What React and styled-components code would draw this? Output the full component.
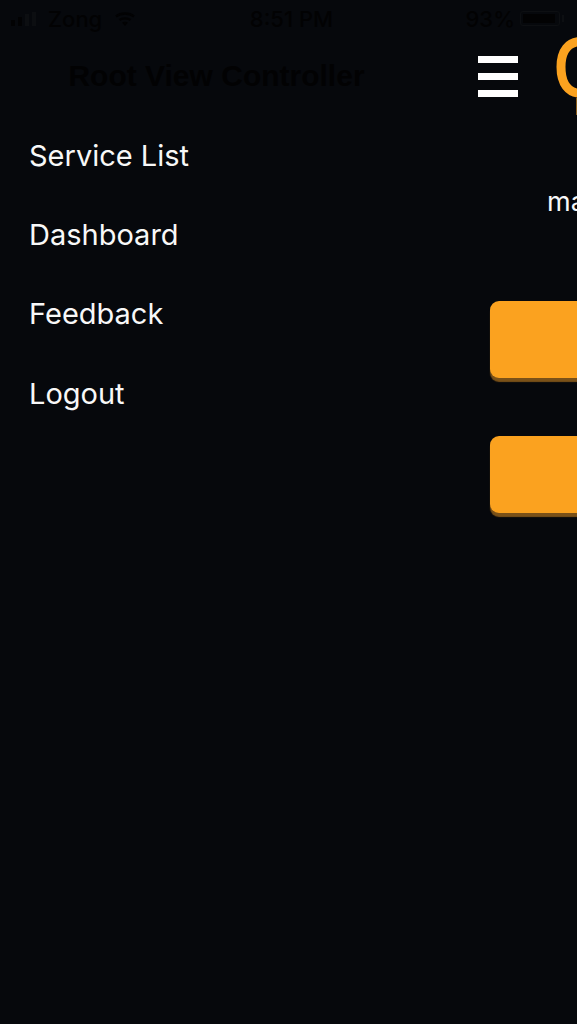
import styled, { createGlobalStyle } from 'styled-components';

const GlobalStyle = createGlobalStyle`
	html, body {
		margin: 0;
		padding: 0;
		background: #06080c;
	}
`;

const Screen = styled.div`
	width: 577px;
	height: 1024px;
	overflow: hidden;
	background: #06080c;
	font-family: Inter, 'Liberation Sans', sans-serif;
	display: flex;
	flex-direction: column;
`;

const StatusBar = styled.div`
	height: 37px;
	flex: none;
	display: grid;
	grid-template-columns: 1fr auto 1fr;
	align-items: center;
	padding: 0 5px 0 11px;
	color: #020203;
	font-size: 22px;
	font-weight: 500;
`;

const StatusLeft = styled.div`
	display: flex;
	align-items: center;
	gap: 12px;
`;

const StatusRight = styled.div`
	display: flex;
	align-items: center;
	justify-content: flex-end;
	gap: 5px;
	padding-right: 12px;
`;

const Signal = styled.div`
	display: flex;
	align-items: flex-end;
	gap: 3px;
	height: 14px;
`;

const SignalBar = styled.span`
	width: 4px;
	height: ${(p) => p.$h}px;
	background: ${(p) => (p.$dim ? '#0c0e11' : '#020203')};
`;

const Wifi = styled.svg`
	flex: none;
`;

const Battery = styled.div`
	position: relative;
	width: 40px;
	height: 15px;
	padding: 2px;
	box-sizing: border-box;
	border: 1px solid #0d0f12;
	border-radius: 3px;

	&::after {
		content: '';
		position: absolute;
		right: -5px;
		top: 3px;
		width: 2px;
		height: 7px;
		background: #0d0f12;
	}
`;

const BatteryFill = styled.div`
	height: 100%;
	width: 93%;
	background: #020203;
`;

const Body = styled.div`
	flex: 1;
	display: flex;
`;

const Drawer = styled.nav`
	width: 433px;
	flex: none;
	display: flex;
	flex-direction: column;
`;

const NavTitle = styled.div`
	height: 78px;
	flex: none;
	display: flex;
	align-items: center;
	justify-content: center;
	color: #020203;
	font-family: 'Liberation Sans', Arial, sans-serif;
	font-size: 30px;
	font-weight: 700;
`;

const MenuList = styled.div`
	padding-top: 0.5px;
`;

const MenuItem = styled.div`
	height: 79.3px;
	display: flex;
	align-items: center;
	padding-left: 29px;
	color: #f8f8f8;
	font-size: 29px;
`;

const Main = styled.main`
	flex: 1;
	min-width: 0;
	display: flex;
	flex-direction: column;
`;

const TopRow = styled.div`
	height: 78px;
	flex: none;
	display: flex;
	align-items: flex-start;
	padding-left: 45px;
	gap: 38px;
`;

const Burger = styled.div`
	width: 40px;
	margin-top: 19px;
	flex: none;
	display: flex;
	flex-direction: column;
	gap: 10px;
`;

const BurgerBar = styled.span`
	height: 7px;
	background: #fff;
`;

const Logo = styled.svg`
	flex: none;
	display: block;
`;

const Email = styled.div`
	margin-top: 68px;
	padding-left: 114px;
	height: 38px;
	line-height: 38px;
	color: #f8f8f8;
	font-size: 27px;
	white-space: nowrap;
`;

const Actions = styled.div`
	margin-top: 80px;
	padding-left: 57px;
	display: flex;
	flex-direction: column;
	gap: 58px;
`;

const ActionButton = styled.div`
	width: 300px;
	height: 77px;
	background: #fba21f;
	border-radius: 9px;
	box-shadow: 0 4px 1px #7a5118;
`;

const MENU = ['Service List', 'Dashboard', 'Feedback', 'Logout'];

const App = () => {
	return (
		<Screen>
			<GlobalStyle />
			<StatusBar>
				<StatusLeft>
					<Signal>
						<SignalBar $h={6} />
						<SignalBar $h={9} />
						<SignalBar $h={12} $dim />
						<SignalBar $h={14} $dim />
					</Signal>
					<span>Zong</span>
					<Wifi width='22' height='16' viewBox='0 0 22 16' fill='none' stroke='#020203' strokeWidth='2.4'>
						<path d='M2 5.5C7 1.5 15 1.5 20 5.5' />
						<path d='M5.5 9C8.5 6.8 13.5 6.8 16.5 9' />
						<path d='M11 15l-3-3.4c1.8-1.2 4.2-1.2 6 0z' fill='#020203' stroke='none' />
					</Wifi>
				</StatusLeft>
				<span>8:51 PM</span>
				<StatusRight>
					<span>93%</span>
					<Battery>
						<BatteryFill />
					</Battery>
				</StatusRight>
			</StatusBar>
			<Body>
				<Drawer>
					<NavTitle>Root View Controller</NavTitle>
					<MenuList>
						{MENU.map((label) => (
							<MenuItem key={label}>{label}</MenuItem>
						))}
					</MenuList>
				</Drawer>
				<Main>
					<TopRow>
						<Burger>
							<BurgerBar />
							<BurgerBar />
							<BurgerBar />
						</Burger>
						<Logo width='30' height='80' viewBox='0 0 30 80'>
							<path d='M26 4.500C12 4.500 5 14 5 30C5 46 12 56.500 26 56.500' fill='none' stroke='#fba21f' strokeWidth='9' />
							<rect x='20' y='61' width='2' height='17' fill='#8a5c1a' />
						</Logo>
					</TopRow>
					<Email>ma</Email>
					<Actions>
						<ActionButton />
						<ActionButton />
					</Actions>
				</Main>
			</Body>
		</Screen>
	);
};

export default App;
